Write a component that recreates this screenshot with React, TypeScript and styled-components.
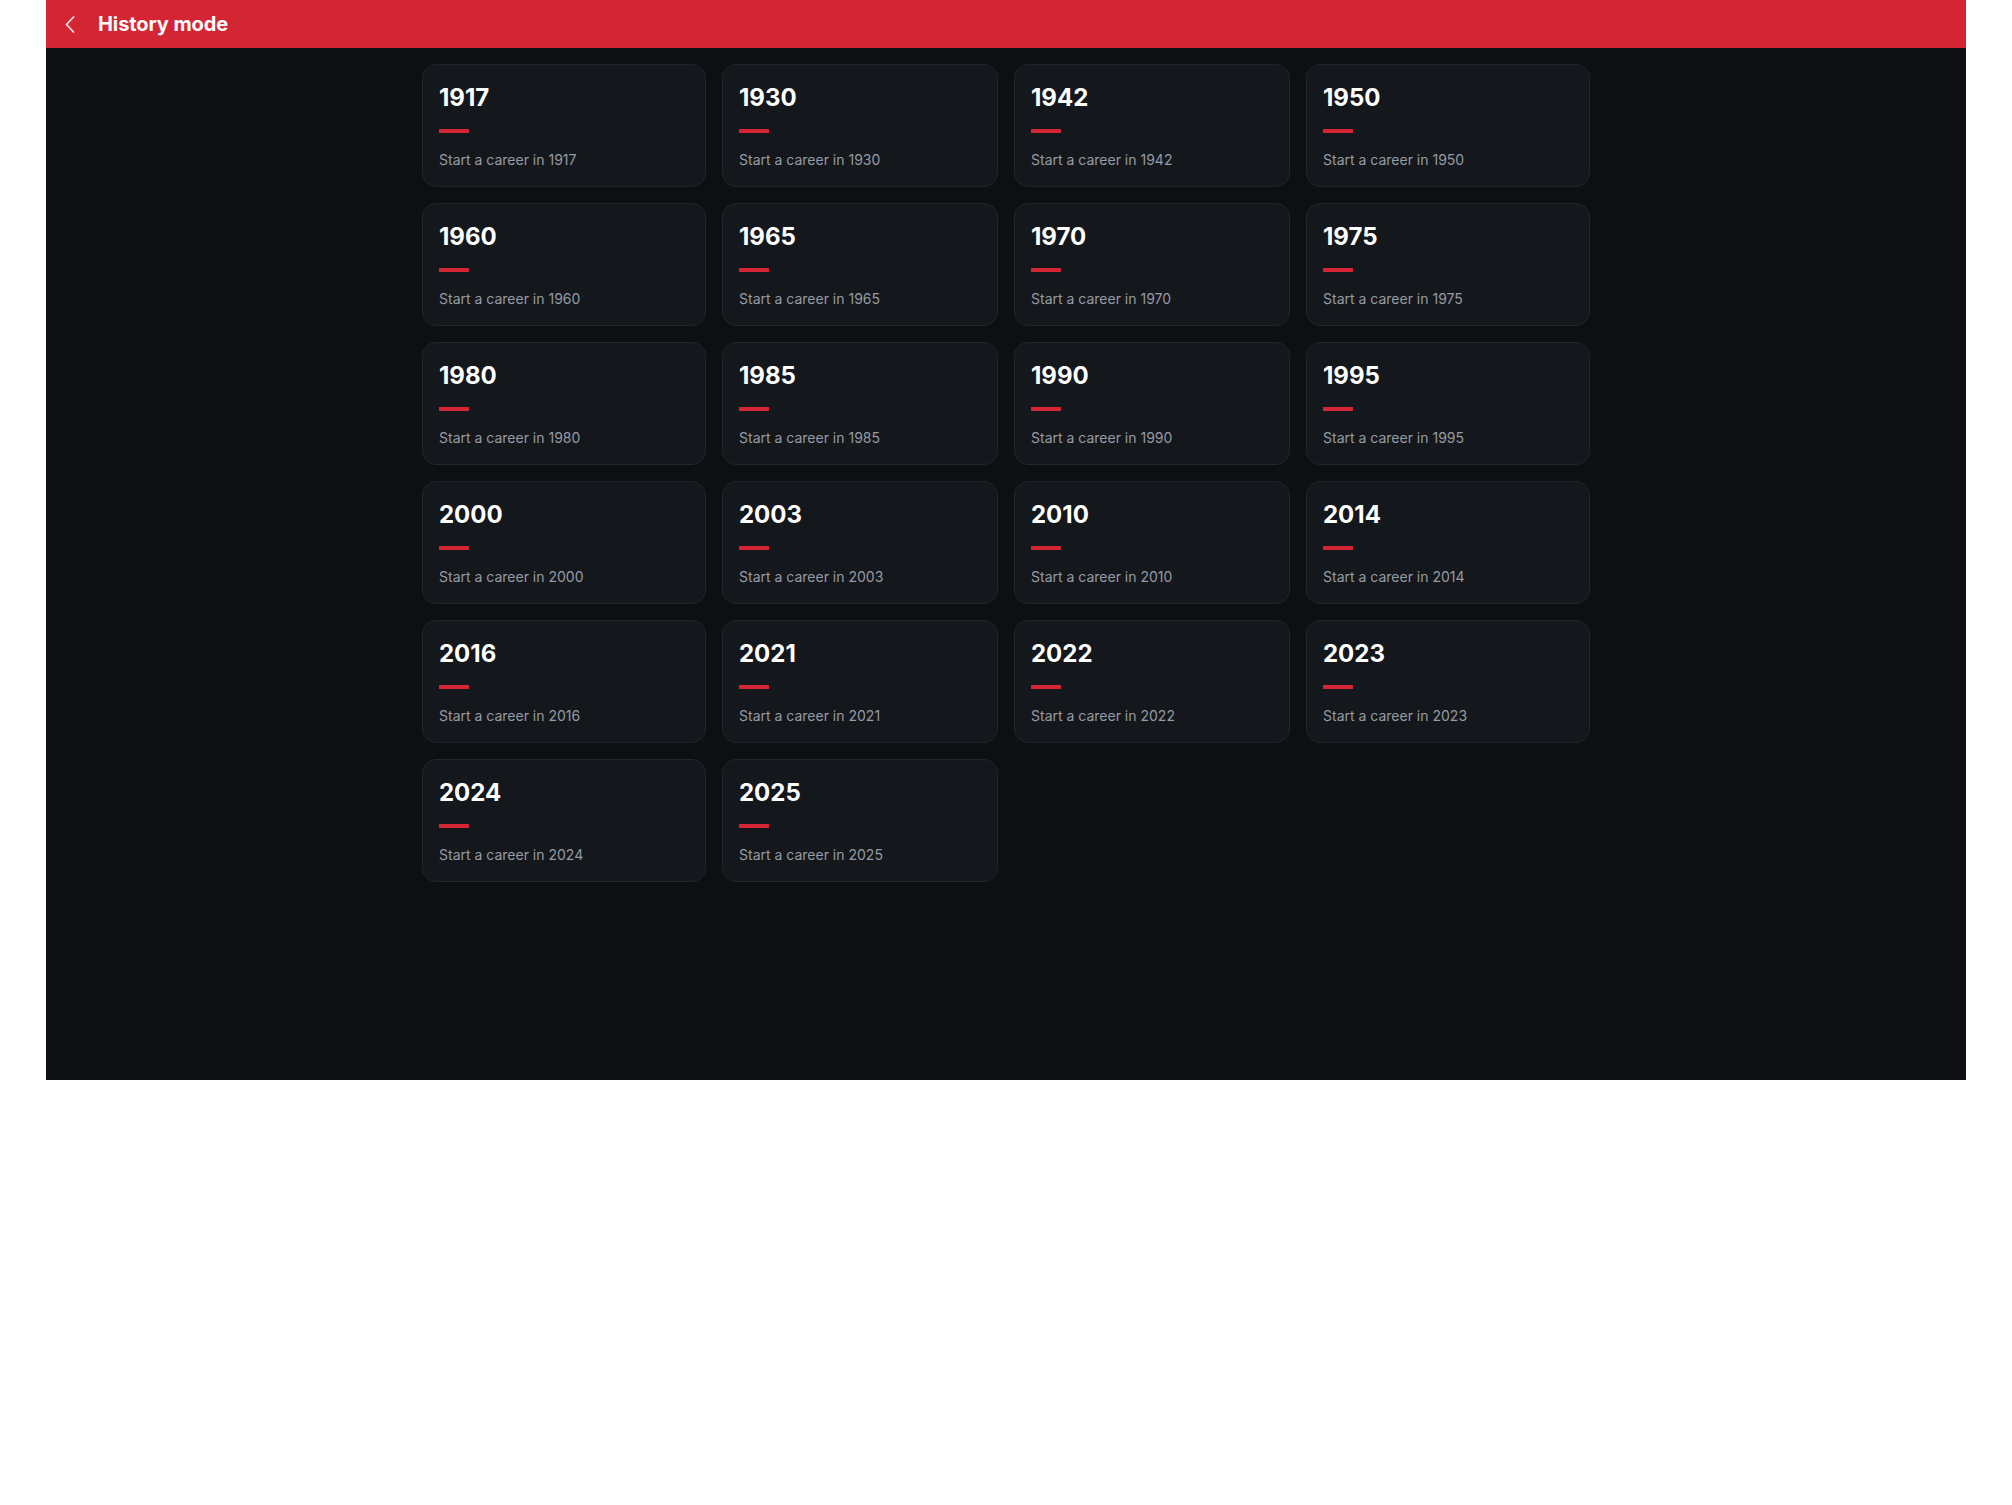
import styled, { createGlobalStyle } from "styled-components";

const GlobalStyle = createGlobalStyle`
    body {
        margin: 0;
        background: #ffffff;
        font-family: Inter, "Noto Sans", sans-serif;
    }
`;

const Frame = styled.div`
    max-width: 1920px;
    height: 1080px;
    margin: 0 auto;
    background: #0e0f13;
    display: flex;
    flex-direction: column;
`;

const TopBar = styled.header`
    height: 48px;
    flex: none;
    background: #d42535;
    display: flex;
    align-items: center;
    padding-left: 18px;
    gap: 22px;
`;

const BackButton = styled.button`
    background: none;
    border: none;
    padding: 0;
    width: 12px;
    height: 20px;
    display: flex;
    align-items: center;
    justify-content: center;
    cursor: pointer;
    color: rgba(255, 255, 255, 0.85);
`;

const Title = styled.h1`
    margin: 0;
    font-size: 20px;
    font-weight: 700;
    color: #ffffff;
    letter-spacing: -0.1px;
`;

const Grid = styled.div`
    display: grid;
    grid-template-columns: 284px 276px 276px 284px;
    grid-auto-rows: 123px;
    column-gap: 16px;
    row-gap: 16px;
    width: 1168px;
    margin: 16px auto 0;
`;

const Card = styled.div`
    background: #14171c;
    border: 1px solid #21252c;
    border-radius: 14px;
    padding: 18px 16px 16px;
    display: flex;
    flex-direction: column;
    cursor: pointer;
`;

const Year = styled.div`
    font-size: 24px;
    font-weight: 700;
    color: #ffffff;
    line-height: 29px;
`;

const Accent = styled.div`
    width: 30px;
    height: 4px;
    background: #d42535;
    margin-top: 17px;
`;

const Caption = styled.div`
    margin-top: 17px;
    font-size: 14px;
    line-height: 20px;
    color: #969ba4;
`;

const years = [
    1917, 1930, 1942, 1950,
    1960, 1965, 1970, 1975,
    1980, 1985, 1990, 1995,
    2000, 2003, 2010, 2014,
    2016, 2021, 2022, 2023,
    2024, 2025,
];

export default function App() {
    return (
        <>
            <GlobalStyle />
            <Frame>
                <TopBar>
                    <BackButton aria-label="Back">
                        <svg width="10" height="17" viewBox="0 0 10 17" fill="none">
                            <path d="M8.5 1 1.5 8.5 8.5 16" stroke="currentColor" strokeWidth="1.8" strokeLinecap="round" strokeLinejoin="round" />
                        </svg>
                    </BackButton>
                    <Title>History mode</Title>
                </TopBar>
                <Grid>
                    {years.map(year => (
                        <Card key={year}>
                            <Year>{year}</Year>
                            <Accent />
                            <Caption>Start a career in {year}</Caption>
                        </Card>
                    ))}
                </Grid>
            </Frame>
        </>
    );
}
